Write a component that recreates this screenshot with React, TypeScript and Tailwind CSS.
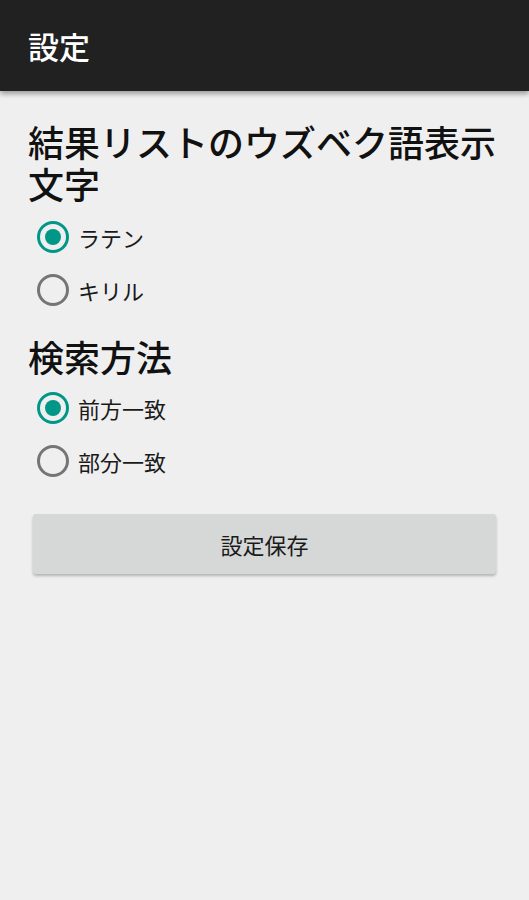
import { useState } from "react"

const font = { fontFamily: '"Noto Sans CJK JP", "Noto Sans", sans-serif' }

function Radio({ label, checked, onClick }: { label: string; checked: boolean; onClick: () => void }) {
  return (
    <button onClick={onClick} className="flex h-[53px] items-center gap-[9px] pl-[37px] text-left">
      <span
        className={
          "flex h-[32px] w-[32px] items-center justify-center rounded-full border-[3px] " +
          (checked ? "border-[#009688]" : "border-[#757575]")
        }
      >
        {checked && <span className="h-[16px] w-[16px] rounded-full bg-[#009688]" />}
      </span>
      <span className="text-[22px] leading-none text-[#1a1a1a]">{label}</span>
    </button>
  )
}

export default function App() {
  const [script, setScript] = useState("latin")
  const [mode, setMode] = useState("prefix")

  return (
    <div className="min-h-[900px] bg-[#efefef]" style={font}>
      <header className="flex h-[91px] items-center bg-[#212121] pl-[28px] shadow-[0_3px_5px_rgba(0,0,0,0.35)]">
        <h1 className="text-[31px] font-medium leading-none text-white">設定</h1>
      </header>

      <div className="pt-[29px]">
        <h2 className="px-[28px] text-[36px] font-medium leading-[42px] text-[#111]">結果リストのウズベク語表示文字</h2>
        <div className="mt-[6px] flex flex-col">
          <Radio label="ラテン" checked={script === "latin"} onClick={() => setScript("latin")} />
          <Radio label="キリル" checked={script === "cyrillic"} onClick={() => setScript("cyrillic")} />
        </div>

        <h2 className="mt-[19px] px-[28px] text-[36px] font-medium leading-[42px] text-[#111]">検索方法</h2>
        <div className="mt-[4px] flex flex-col">
          <Radio label="前方一致" checked={mode === "prefix"} onClick={() => setMode("prefix")} />
          <Radio label="部分一致" checked={mode === "partial"} onClick={() => setMode("partial")} />
        </div>

        <div className="px-[33px] pt-[27px]">
          <button className="h-[60px] w-full rounded-[3px] bg-[#d6d7d7] text-[22px] text-[#1a1a1a] shadow-[0_2px_3px_rgba(0,0,0,0.25)]">
            設定保存
          </button>
        </div>
      </div>
    </div>
  )
}
